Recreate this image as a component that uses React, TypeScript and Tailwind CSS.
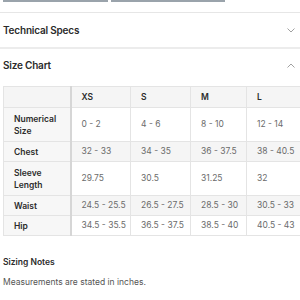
import React from "react";

const ROWS: { label: string[]; values: string[]; striped: boolean }[] = [
  { label: ["Numerical", "Size"], values: ["0 - 2", "4 - 6", "8 - 10", "12 - 14"], striped: false },
  { label: ["Chest"], values: ["32 - 33", "34 - 35", "36 - 37.5", "38 - 40.5"], striped: true },
  { label: ["Sleeve", "Length"], values: ["29.75", "30.5", "31.25", "32"], striped: false },
  { label: ["Waist"], values: ["24.5 - 25.5", "26.5 - 27.5", "28.5 - 30", "30.5 - 33"], striped: true },
  { label: ["Hip"], values: ["34.5 - 35.5", "36.5 - 37.5", "38.5 - 40", "40.5 - 43"], striped: false },
];

const SIZES = ["XS", "S", "M", "L"];

function Chevron({ up }: { up?: boolean }) {
  return (
    <svg width="8" height="5" viewBox="0 0 8 5" className="text-[#a0a0a0]">
      <path
        d={up ? "M0.5 4.5 L4 1 L7.5 4.5" : "M0.5 0.5 L4 4 L7.5 0.5"}
        fill="none"
        stroke="currentColor"
        strokeWidth="1"
      />
    </svg>
  );
}

export default function App() {
  return (
    <div
      className="h-[300px] w-[300px] overflow-hidden bg-white text-[#2b2b2b]"
      style={{ fontFamily: "Inter, 'Liberation Sans', sans-serif" }}
    >
      {/* bottom of the buttons above */}
      <div className="flex h-[2px] gap-[3px] pl-[3px]">
        <div className="w-[105px] bg-[#9aa3ab]" />
        <div className="w-[114px] bg-[#9aa3ab]" />
      </div>

      <div className="mt-[10px] border-t border-[#e6e6e6]" />
      <div className="flex h-[34px] items-center justify-between pl-[3px] pr-[5px]">
        <span className="text-[10px] font-semibold tracking-[-0.2px]">Technical Specs</span>
        <Chevron />
      </div>
      <div className="border-t-[2px] border-[#ececec]" />
      <div className="flex h-[33px] items-center justify-between pl-[3px] pr-[5px]">
        <span className="text-[10px] font-semibold tracking-[-0.2px]">Size Chart</span>
        <Chevron up />
      </div>

      <div className="mt-[4px] pl-[3px]">
        <table className="w-[299px] table-fixed border-collapse text-[8.5px]">
          <colgroup>
            <col className="w-[67px]" />
            <col className="w-[60px]" />
            <col className="w-[60px]" />
            <col className="w-[56px]" />
            <col className="w-[56px]" />
          </colgroup>
          <thead>
            <tr className="h-[21px] bg-[#f5f5f5]">
              <th className="border border-r-[2px] border-[#e4e4e4] border-r-[#d6d6d6]" />
              {SIZES.map((s) => (
                <th
                  key={s}
                  className="border border-[#e4e4e4] pl-[10px] text-left font-semibold text-[#2b2b2b]"
                >
                  {s}
                </th>
              ))}
            </tr>
          </thead>
          <tbody>
            {ROWS.map((row) => (
              <tr
                key={row.label.join(" ")}
                className={`${row.label.length > 1 ? "h-[34px]" : "h-[20px]"} ${
                  row.striped ? "bg-[#f5f5f5]" : "bg-white"
                }`}
              >
                <th className="border border-r-[2px] border-[#e4e4e4] border-r-[#d6d6d6] bg-[#f7f7f7] pl-[10px] text-left font-semibold leading-[12px] text-[#2b2b2b]">
                  {row.label.map((l) => (
                    <div key={l}>{l}</div>
                  ))}
                </th>
                {row.values.map((v, i) => (
                  <td
                    key={i}
                    className="whitespace-nowrap border border-[#e4e4e4] pl-[10px] text-[#6b6b6b]"
                  >
                    {v}
                  </td>
                ))}
              </tr>
            ))}
          </tbody>
        </table>
      </div>

      <div className="mt-[20px] pl-[3px]">
        <div className="text-[8.5px] font-semibold">Sizing Notes</div>
        <div className="mt-[7px] text-[8.5px] text-[#555]">
          Measurements are stated in inches.
        </div>
      </div>
    </div>
  );
}
